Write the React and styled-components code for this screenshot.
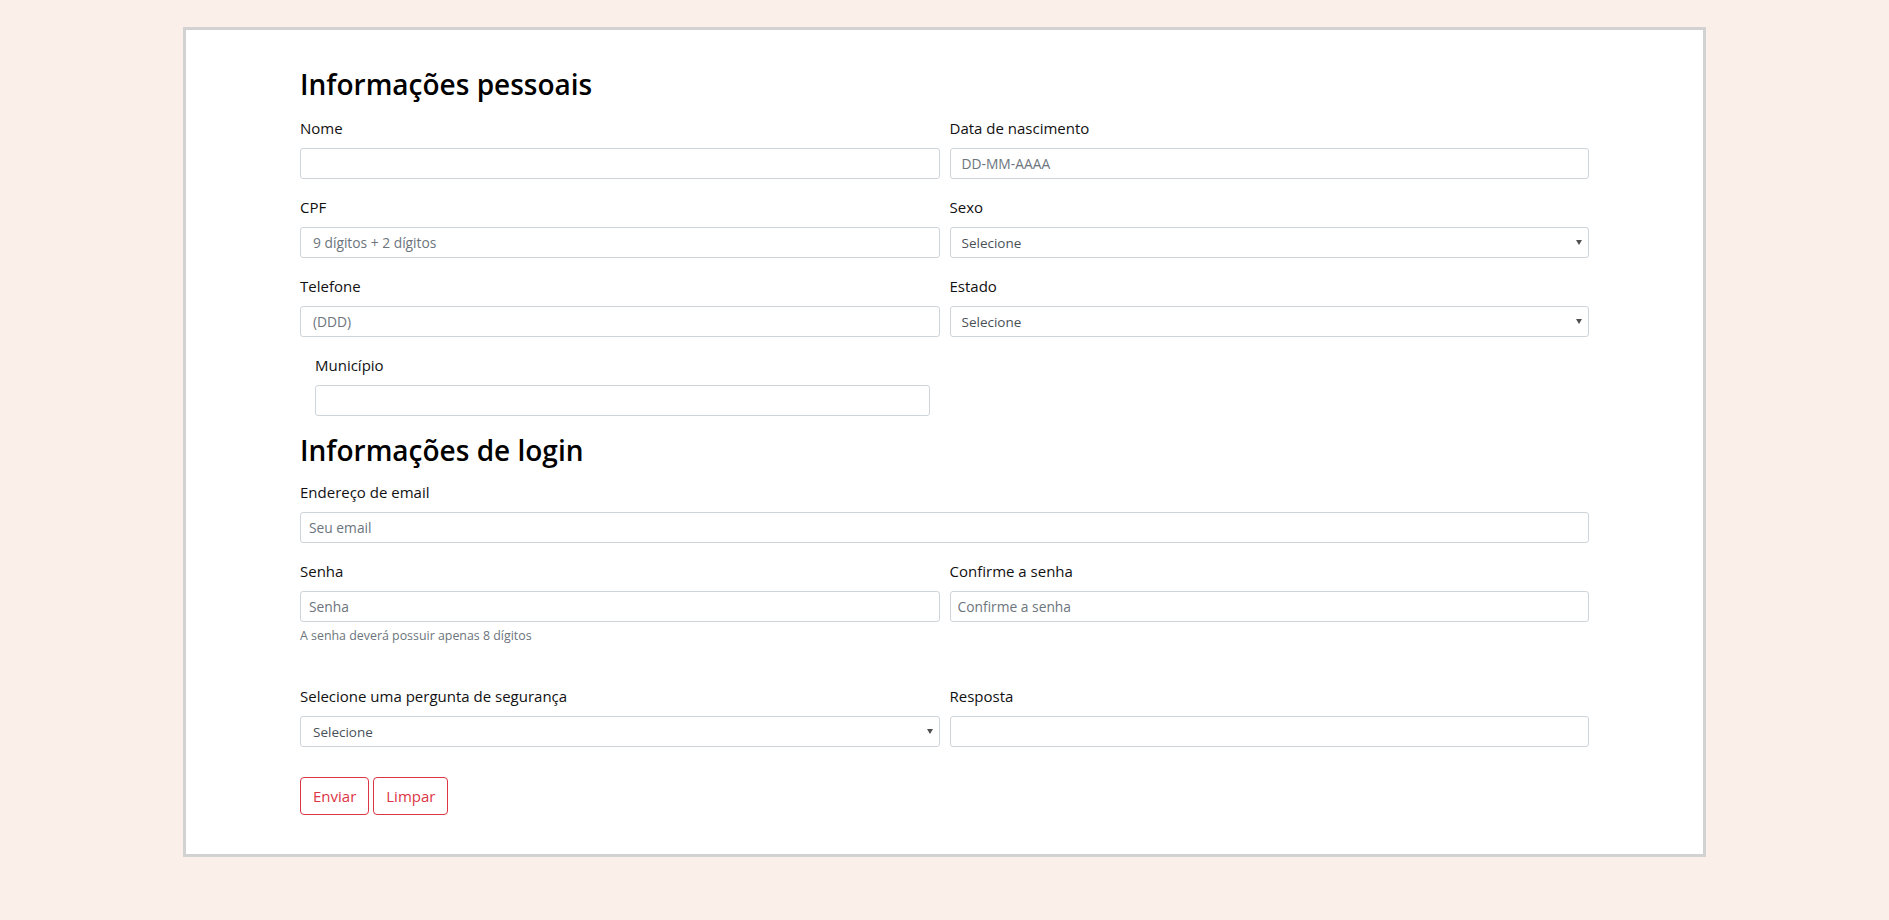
import React from "react";
import styled, { createGlobalStyle } from "styled-components";

const GlobalStyle = createGlobalStyle`
  html, body {
    margin: 0;
    padding: 0;
  }
  body {
    background: #fbefea;
    font-family: "Open Sans", "Noto Sans", "Liberation Sans", sans-serif;
    color: #212529;
  }
`;

function Select({ inset, options }) {
  return (
    <SelectBox>
      <SelectInput $inset={inset} defaultValue="">
        <option value="">Selecione</option>
        {options.map((o) => (
          <option key={o}>{o}</option>
        ))}
      </SelectInput>
    </SelectBox>
  );
}

function Field({ label, children, help }) {
  return (
    <Group>
      <Label>{label}</Label>
      {children}
      {help && <Help>{help}</Help>}
    </Group>
  );
}

export default function App() {
  return (
    <>
      <GlobalStyle />
      <Card>
        <form onSubmit={(e) => e.preventDefault()}>
          <Title>Informações pessoais</Title>
          <Row>
            <Field label="Nome">
              <Input $inset={11} />
            </Field>
            <Field label="Data de nascimento">
              <Input $inset={11} placeholder="DD-MM-AAAA" />
            </Field>
          </Row>
          <Row>
            <Field label="CPF">
              <Input $inset={12} placeholder="9 dígitos + 2 dígitos" />
            </Field>
            <Field label="Sexo">
              <Select inset={11} options={["Masculino", "Feminino"]} />
            </Field>
          </Row>
          <Row>
            <Field label="Telefone">
              <Input $inset={12} placeholder="(DDD)" />
            </Field>
            <Field label="Estado">
              <Select inset={11} options={["AC", "AL", "AM", "BA", "SP"]} />
            </Field>
          </Row>
          <HalfCol>
            <Field label="Município">
              <Input $inset={11} />
            </Field>
          </HalfCol>

          <LoginTitle>Informações de login</LoginTitle>
          <Field label="Endereço de email">
            <Input $inset={8} placeholder="Seu email" />
          </Field>
          <Row $after={23}>
            <Field label="Senha" help="A senha deverá possuir apenas 8 dígitos">
              <Input $inset={8} type="password" placeholder="Senha" />
            </Field>
            <Field label="Confirme a senha">
              <Input $inset={7} type="password" placeholder="Confirme a senha" />
            </Field>
          </Row>
          <Row $after={14}>
            <Field label="Selecione uma pergunta de segurança">
              <Select
                inset={12}
                options={["Nome do primeiro animal", "Cidade natal"]}
              />
            </Field>
            <Field label="Resposta">
              <Input $inset={8} />
            </Field>
          </Row>
          <Actions>
            <OutlineButton type="submit">Enviar</OutlineButton>
            <OutlineButton type="reset">Limpar</OutlineButton>
          </Actions>
        </form>
      </Card>
    </>
  );
}

const Card = styled.div`
  box-sizing: border-box;
  width: 1523px;
  margin: 27px auto 0;
  padding: 36px 114px 39px;
  background: #fff;
  border: 3px solid #d2d2d2;
`;

const Title = styled.h2`
  margin: 0 0 14px;
  font-size: 28px;
  line-height: 36px;
  font-weight: 600;
  color: #000;
`;

const LoginTitle = styled(Title)`
  margin: 2px 0 12px;
`;

const Row = styled.div`
  display: grid;
  grid-template-columns: 1fr 1fr;
  column-gap: 10px;
  margin-bottom: ${(p) => p.$after || 0}px;
`;

const HalfCol = styled.div`
  box-sizing: border-box;
  width: 50%;
  padding: 0 15px;
`;

const Group = styled.div`
  margin-bottom: 16px;
  min-width: 0;
`;

const Label = styled.label`
  display: block;
  margin-bottom: 8px;
  font-size: 15px;
  line-height: 24px;
  color: #111;
`;

const Input = styled.input`
  box-sizing: border-box;
  display: block;
  width: 100%;
  height: 31px;
  margin: 0;
  padding: 0 ${(p) => p.$inset}px;
  font-family: inherit;
  font-size: 13.8px;
  color: #495057;
  background: #fff;
  border: 1px solid #ced4da;
  border-radius: 3px;
  outline: none;

  &::placeholder {
    color: #6c757d;
    opacity: 1;
  }
`;

const SelectBox = styled.div`
  position: relative;

  &::after {
    content: "";
    position: absolute;
    right: 7px;
    top: 13px;
    border-left: 3px solid transparent;
    border-right: 3px solid transparent;
    border-top: 5px solid #505050;
    pointer-events: none;
  }
`;

const SelectInput = styled.select`
  box-sizing: border-box;
  display: block;
  width: 100%;
  height: 31px;
  margin: 0;
  padding: 0 20px 0 ${(p) => p.$inset}px;
  appearance: none;
  font-family: inherit;
  font-size: 13.5px;
  color: #495057;
  background: #fff;
  border: 1px solid #ced4da;
  border-radius: 3px;
  outline: none;
`;

const Help = styled.small`
  display: block;
  margin-top: 4px;
  font-size: 12.4px;
  line-height: 19px;
  color: #6c757d;
`;

const Actions = styled.div`
  display: flex;
  gap: 4px;
`;

const OutlineButton = styled.button`
  box-sizing: border-box;
  height: 38px;
  padding: 0 12px;
  font-family: inherit;
  font-size: 15px;
  line-height: 24px;
  color: #dc3545;
  background: #fff;
  border: 1px solid #dc3545;
  border-radius: 4px;
  cursor: pointer;
`;
